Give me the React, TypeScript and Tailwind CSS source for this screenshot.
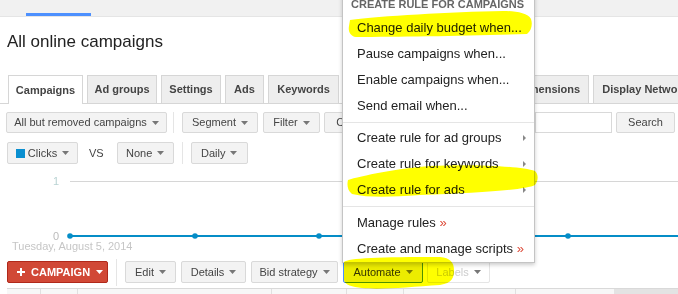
import type { ReactNode } from "react";

const Caret = ({ color = "#777" }: { color?: string }) => (
  <svg width="7" height="4" viewBox="0 0 7 4" className="shrink-0">
    <path d="M0 0h7L3.5 4z" fill={color} />
  </svg>
);

function Btn({ w, children, caret = true, className = "" }: { w: string; children: ReactNode; caret?: boolean; className?: string }) {
  return (
    <div
      className={`${w} h-full flex items-center justify-center gap-[5px] rounded-[2px] border border-[#d9d9d9] bg-[#f3f3f3] text-[11px] text-[#444] whitespace-nowrap ${className}`}
    >
      {children}
      {caret && <Caret />}
    </div>
  );
}

const Sep = ({ h = "h-full" }: { h?: string }) => <div className={`w-px ${h} bg-[#e5e5e5]`} />;

const TABS = [
  { label: "Campaigns", w: "w-[75px]", active: true },
  { label: "Ad groups", w: "w-[70px]" },
  { label: "Settings", w: "w-[60px]" },
  { label: "Ads", w: "w-[39px]" },
  { label: "Keywords", w: "w-[71px]" },
  { label: "Audiences", w: "w-[72px]" },
  { label: "Ad extensions", w: "w-[86px]" },
  { label: "Dimensions", w: "w-[80px]" },
  { label: "Display Network", w: "w-[104px]" },
];

const MENU_TOP = ["Change daily budget when...", "Pause campaigns when...", "Enable campaigns when...", "Send email when..."];
const MENU_SUB = ["Create rule for ad groups", "Create rule for keywords", "Create rule for ads"];
const MENU_LINKS = ["Manage rules", "Create and manage scripts"];

function Chart() {
  const dots = [70, 195, 319, 444, 568, 693];
  return (
    <svg width="678" height="95" className="block" style={{ fontFamily: "'Liberation Sans', Arial, sans-serif" }}>
      <text x="59" y="21" fontSize="11" textAnchor="end" fill="#b9d3d3">1</text>
      <line x1="70" y1="17.5" x2="678" y2="17.5" stroke="#d6d6d6" />
      <text x="59" y="76" fontSize="11" textAnchor="end" fill="#bbb">0</text>
      <line x1="70" y1="72" x2="700" y2="72" stroke="#058dc7" strokeWidth="2" />
      {dots.map((x) => (
        <circle key={x} cx={x} cy="72" r="2.8" fill="#058dc7" />
      ))}
      <text x="12" y="86" fontSize="11" fill="#c6c6c6">Tuesday, August 5, 2014</text>
    </svg>
  );
}

function AutomateMenu() {
  const item = "h-[26px] flex items-center justify-between pl-[14px] pr-[8px] text-[13px] text-[#222] whitespace-nowrap";
  return (
    <div className="absolute left-[342px] top-[-8px] w-[193px] bg-white border border-[#c4c4c4] shadow-[0_2px_4px_rgba(0,0,0,0.2)]">
      <div className="h-[22px] flex items-center pl-[8px] text-[11px] font-bold text-[#666] uppercase">Create rule for campaigns</div>
      {MENU_TOP.map((t) => (
        <div key={t} className={item}>{t}</div>
      ))}
      <div className="mt-[3px] mb-[2px] h-px bg-[#e5e5e5]" />
      {MENU_SUB.map((t) => (
        <div key={t} className={item}>
          <span>{t}</span>
          <svg width="3" height="6" viewBox="0 0 3 6"><path d="M0 0l3 3-3 3z" fill="#888" /></svg>
        </div>
      ))}
      <div className="mt-[3px] mb-[3px] h-px bg-[#e5e5e5]" />
      {MENU_LINKS.map((t) => (
        <div key={t} className={item}>
          <span>
            {t} <span className="text-[#dd4b39]">»</span>
          </span>
        </div>
      ))}
    </div>
  );
}

export default function App() {
  return (
    <div className="relative w-[678px] h-[294px] overflow-hidden bg-white font-['Liberation_Sans',Arial,sans-serif]">
      <div className="h-[17px] bg-[#f1f1f1] border-b border-[#e5e5e5] flex items-end">
        <div className="ml-[26px] w-[65px] h-[3px] bg-[#4d90fe]" />
      </div>

      <h1 className="mt-[15px] ml-[7px] text-[17px] leading-[20px] text-[#222]">All online campaigns</h1>

      <div className="mt-[23px] h-[29px] flex items-end gap-[4px] pl-[8px] border-b border-[#d6d6d6]">
        {TABS.map((t) => (
          <div
            key={t.label}
            className={`${t.w} shrink-0 border border-b-0 border-[#d6d6d6] text-center text-[11px] font-bold text-[#444] whitespace-nowrap ${
              t.active ? "bg-white h-[29px] -mb-px leading-[28px]" : "bg-[#eeeeee] h-[28px] leading-[27px]"
            }`}
          >
            {t.label}
          </div>
        ))}
      </div>

      <div className="mt-[8px] h-[21px] flex items-center pl-[6px] pr-[3px]">
        <Btn w="w-[161px]">All but removed campaigns</Btn>
        <div className="ml-[6px] mr-[8px] h-full"><Sep /></div>
        <Btn w="w-[76px]">Segment</Btn>
        <Btn w="w-[57px]" className="ml-[5px]">Filter</Btn>
        <Btn w="w-[80px]" className="ml-[4px]">Columns</Btn>
        <div className="ml-auto w-[77px] h-full border border-[#d9d9d9] bg-white" />
        <Btn w="w-[59px]" caret={false} className="ml-[4px]">Search</Btn>
      </div>

      <div className="mt-[9px] h-[22px] flex items-center pl-[7px]">
        <Btn w="w-[71px]">
          <span className="flex items-center gap-[3px]">
            <span className="w-[9px] h-[9px] bg-[#0a8fd0]" />
            Clicks
          </span>
        </Btn>
        <span className="ml-[11px] mr-[13px] text-[11px] text-[#444]">VS</span>
        <Btn w="w-[57px]">None</Btn>
        <div className="ml-[8px] mr-[8px] h-full"><Sep /></div>
        <Btn w="w-[57px]">Daily</Btn>
      </div>

      <Chart />

      <div className="mt-[2px] h-[22px] flex items-center pl-[7px]">
        <div className="w-[101px] h-full flex items-center rounded-[2px] bg-[#d14836] border border-[#b0281a] text-white text-[11px] font-bold pl-[9px] gap-[6px]">
          <svg width="8" height="8" viewBox="0 0 8 8" className="shrink-0"><path d="M3 0h2v3h3v2H5v3H3V5H0V3h3z" fill="#fff" /></svg>
          <span>CAMPAIGN</span>
          <Caret color="#fff" />
        </div>
        <div className="ml-[8px] mr-[8px] h-[27px]"><Sep h="h-[27px]" /></div>
        <Btn w="w-[51px]">Edit</Btn>
        <Btn w="w-[65px]" className="ml-[5px]">Details</Btn>
        <Btn w="w-[87px]" className="ml-[5px]">Bid strategy</Btn>
        <Btn w="w-[80px]" className="ml-[5px] !border-[#4d90fe] !bg-[#ececec] !text-[#333]">Automate</Btn>
        <Btn w="w-[63px]" className="ml-[4px] !bg-white !border-[#e5e5e5] !text-[#ccc]">Labels</Btn>
      </div>

      <div className="mt-[5px] ml-[7px] h-[20px] flex border-t border-[#d9d9d9] bg-[#f7f7f7]">
        <div className="w-[34px] border-r border-[#e0e0e0]" />
        <div className="w-[37px] border-r border-[#e0e0e0]" />
        <div className="w-[194px] border-r border-[#e0e0e0]" />
        <div className="w-[75px] border-r border-[#e0e0e0]" />
        <div className="w-[57px] border-r border-[#e0e0e0]" />
        <div className="w-[112px] border-r border-[#e0e0e0]" />
        <div className="w-[98px]" />
        <div className="flex-1 bg-[#e3e3e3]" />
      </div>

      <AutomateMenu />

      <svg width="678" height="294" className="absolute left-0 top-0 pointer-events-none mix-blend-multiply">
        <path
          d="M350,20 C380,16 450,12 503,11 C515,11 528,13 531,19 C533,25 531,31 527,34 C470,36 400,37 356,37 C350,36 348,31 349,26 Z"
          fill="#ffff00"
        />
        <path
          d="M348,180 C360,176 400,168 430,166 C470,164 520,166 535,171 C539,175 538,181 535,185 C525,190 480,193 420,195 C390,197 370,198 352,194 C347,190 347,184 348,180 Z"
          fill="#ffff00"
        />
        <path
          d="M344,262 C348,258 380,257 440,257 C450,258 454,262 454,270 C454,278 452,283 440,285 C410,287 380,290 362,288 C352,287 345,285 344,280 Z"
          fill="#ffff00"
        />
      </svg>
    </div>
  );
}
